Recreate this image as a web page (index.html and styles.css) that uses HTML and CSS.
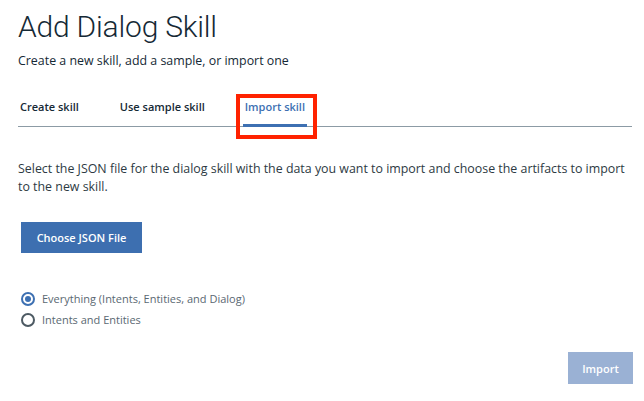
FILE: index.html
```html
<!DOCTYPE html>
<html>
<head>
<meta charset="utf-8">
<link rel="stylesheet" href="styles.css">
</head>
<body>
<div class="page">
  <h1 class="title">Add Dialog Skill</h1>
  <p class="subtitle">Create a new skill, add a sample, or import one</p>
  <div class="tabs">
    <div class="tab">Create skill</div>
    <div class="tab">Use sample skill</div>
    <div class="tab active">Import skill<span class="highlight"></span></div>
  </div>
  <p class="desc">Select the JSON file for the dialog skill with the data you want to import and choose the artifacts to import to the new skill.</p>
  <button class="btn primary">Choose JSON File</button>
  <div class="radios">
    <label class="radio"><span class="dot checked"></span>Everything (Intents, Entities, and Dialog)</label>
    <label class="radio"><span class="dot"></span>Intents and Entities</label>
  </div>
  <div class="footer">
    <button class="btn disabled">Import</button>
  </div>
</div>
</body>
</html>
```
FILE: styles.css
```css
* { box-sizing: border-box; }
html, body { margin: 0; background: #fff; }
body { font-family: "Open Sans", "Noto Sans", sans-serif; color: #152935; }
.page { padding: 8px 12px 0 18px; width: 644px; height: 401px; }
.title { font-family: Roboto, "Open Sans", sans-serif; font-size: 30px; font-weight: 300; margin: 0; line-height: 38px; letter-spacing: -0.2px; }
.subtitle { font-size: 12.4px; margin: 6px 0 0; line-height: 18px; }
.tabs { display: flex; margin-top: 24px; border-bottom: 1px solid #8c9ba5; height: 33px; padding-left: 2px; }
.tab { position: relative; font-size: 11px; font-weight: 600; line-height: 18px; padding-top: 4px; margin-right: 41px; }
.tab.active { color: #3d70b2; margin-left: -1px; }
.tab.active::after { content: ""; position: absolute; left: -2px; right: -2px; bottom: -1px; height: 3px; background: #3d70b2; }
.highlight { position: absolute; left: -9px; top: 0; width: 81px; height: 45px; border: 4px solid #ff2200; }
.desc { font-size: 12.4px; line-height: 18px; margin: 33px 0 0; color: #2d3a43; }
.btn { font-family: inherit; border: 0; color: #fff; font-weight: 600; font-size: 11px; }
.primary { margin: 26px 0 0 3px; width: 121px; height: 31px; background: #3d6fb0; }
.radios { margin-top: 39px; display: flex; flex-direction: column; gap: 7px; padding-left: 3px; }
.radio { display: flex; align-items: center; font-size: 11px; color: #5a6872; line-height: 14px; }
.dot { width: 14px; height: 14px; border-radius: 50%; border: 2px solid #4d5a63; margin-right: 7px; position: relative; }
.dot.checked { border-color: #3d70b2; }
.dot.checked::after { content: ""; position: absolute; left: 2px; top: 2px; width: 6px; height: 6px; border-radius: 50%; background: #3d70b2; }
.footer { display: flex; justify-content: flex-end; margin-top: 25px; }
.disabled { width: 65px; height: 32px; background: #9ab1d4; margin-right: -1px; }
```
